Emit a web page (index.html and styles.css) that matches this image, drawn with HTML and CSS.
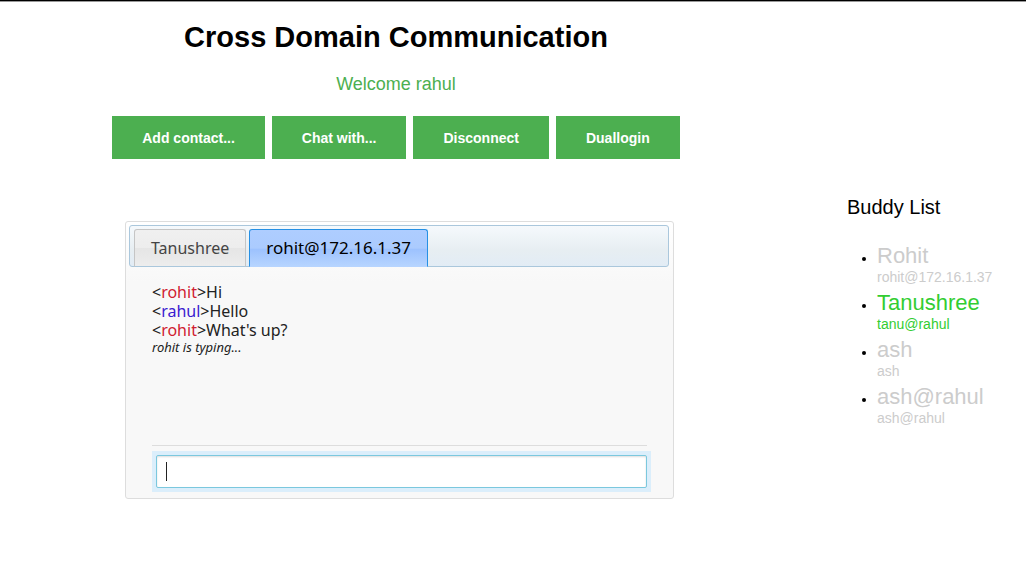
FILE: index.html
```html
<!DOCTYPE html>
<html lang="en">
<head>
<meta charset="utf-8">
<title>Cross Domain Communication</title>
<link rel="stylesheet" href="styles.css">
</head>
<body>
<div class="page">
  <main class="main">
    <h1 class="title">Cross Domain Communication</h1>
    <p class="welcome">Welcome rahul</p>
    <div class="toolbar">
      <button type="button" class="action">Add contact...</button>
      <button type="button" class="action">Chat with...</button>
      <button type="button" class="action">Disconnect</button>
      <button type="button" class="action">Duallogin</button>
    </div>
    <section class="chat">
      <div class="tabs" role="tablist">
        <button type="button" class="tab" role="tab" aria-selected="false">Tanushree</button>
        <button type="button" class="tab tab-active" role="tab" aria-selected="true">rohit@172.16.1.37</button>
      </div>
      <div class="conversation" role="tabpanel">
        <div class="messages">
          <div class="message"><span>&lt;</span><span class="them">rohit</span><span>&gt;Hi</span></div>
          <div class="message"><span>&lt;</span><span class="me">rahul</span><span>&gt;Hello</span></div>
          <div class="message"><span>&lt;</span><span class="them">rohit</span><span>&gt;What's up?</span></div>
          <div class="typing">rohit is typing...</div>
        </div>
        <div class="entry">
          <input type="text" class="entry-input" aria-label="Message">
          <span class="caret"></span>
        </div>
      </div>
    </section>
  </main>
  <aside class="buddies">
    <h2 class="buddies-title">Buddy List</h2>
    <ul class="buddy-list">
      <li class="buddy"><div class="buddy-name">Rohit</div><div class="buddy-id">rohit@172.16.1.37</div></li>
      <li class="buddy online"><div class="buddy-name">Tanushree</div><div class="buddy-id">tanu@rahul</div></li>
      <li class="buddy"><div class="buddy-name">ash</div><div class="buddy-id">ash</div></li>
      <li class="buddy"><div class="buddy-name">ash@rahul</div><div class="buddy-id">ash@rahul</div></li>
    </ul>
  </aside>
</div>
</body>
</html>
```

FILE: styles.css
```css
* { box-sizing: border-box; }

body {
  margin: 0;
  background: #fff;
  color: #000;
  font-family: "Liberation Sans", Arial, sans-serif;
  border-top: 1px solid #000;
}

.page {
  display: flex;
  border-top: 1px solid #999;
}

.main {
  flex: 1;
  display: flex;
  flex-direction: column;
  align-items: center;
  padding: 18px 0 24px;
}

.title {
  margin: 0;
  font-size: 29px;
  line-height: 34px;
}

.welcome {
  margin: 20px 0 0;
  font-size: 18px;
  line-height: 20px;
  color: #4caf50;
}

.toolbar {
  display: flex;
  gap: 7px;
  margin-top: 22px;
}

.action {
  border: 0;
  padding: 13px 30px 11px;
  background: #4caf50;
  color: #fff;
  font: bold 14px/19px "Liberation Sans", Arial, sans-serif;
}

.chat {
  width: 549px;
  max-width: 100%;
  margin: 62px 0 0 7px;
  padding: 3px 4px 6px 3px;
  border: 1px solid #ddd;
  border-radius: 3px;
  background: linear-gradient(#fff, #f8f8f8 60px);
  font-family: "Noto Sans", "Open Sans", sans-serif;
}

.tabs {
  display: flex;
  align-items: flex-end;
  gap: 3px;
  height: 42px;
  padding: 0 4px;
  border: 1px solid #aac7dc;
  border-radius: 3px;
  background: linear-gradient(#f5f9fc, #e7eef2 60%, #e2ecf5);
}

.tab {
  height: 38px;
  margin-bottom: -1px;
  padding: 0 16px;
  border: 1px solid #c5c5c5;
  border-bottom-color: #aac7dc;
  border-radius: 3px 3px 0 0;
  background: linear-gradient(#f0f0f0, #ededed 50%, #e5e5e5 50%, #ededed);
  color: #444;
  font: 16px/20px "Noto Sans", "Open Sans", sans-serif;
}

.tab-active {
  border-color: #2690e4;
  border-bottom-color: #b6d4ff;
  background: linear-gradient(#aecdff, #abcbfe 50%, #9dc2fe 54%, #b6d4ff);
  color: #000;
  font-size: 17px;
}

.conversation { padding: 16px 18px 0 23px; }

.messages {
  height: 163px;
  margin-right: 4px;
  border-bottom: 1px solid #ddd;
  color: #222;
  font-size: 16px;
  line-height: 19px;
}

.message { display: flex; }
.them { color: #d02030; }
.me { color: #3a20d0; }

.typing {
  font-size: 13px;
  line-height: 14px;
  font-style: italic;
}

.entry {
  position: relative;
  margin-top: 5px;
  padding: 4px;
  background: #dbeefb;
}

.entry-input {
  display: block;
  width: 100%;
  height: 33px;
  padding: 0 9px;
  border: 1px solid #7bc8de;
  border-radius: 2px;
  outline: 0;
  background: #fff;
  box-shadow: inset 0 1px 2px #ddd;
  font: 16px/20px "Noto Sans", "Open Sans", sans-serif;
}

.caret {
  position: absolute;
  left: 14px;
  top: 11px;
  width: 1px;
  height: 19px;
  background: #222;
}

.entry:focus-within .caret { display: none; }

.buddies {
  flex: none;
  width: 234px;
  padding: 193px 0 0 55px;
}

.buddies-title {
  margin: 0;
  font-size: 20px;
  line-height: 24px;
  font-weight: normal;
}

.buddy-list {
  margin: 24px 0 0;
  padding-left: 30px;
  font-size: 14px;
}

.buddy { margin-bottom: 4px; color: #ccc; }
.buddy::marker { color: #000; }
.online { color: #32cd32; }

.buddy-name {
  font-size: 22px;
  line-height: 25px;
}

.buddy-id {
  font-size: 14px;
  line-height: 18px;
}
```
